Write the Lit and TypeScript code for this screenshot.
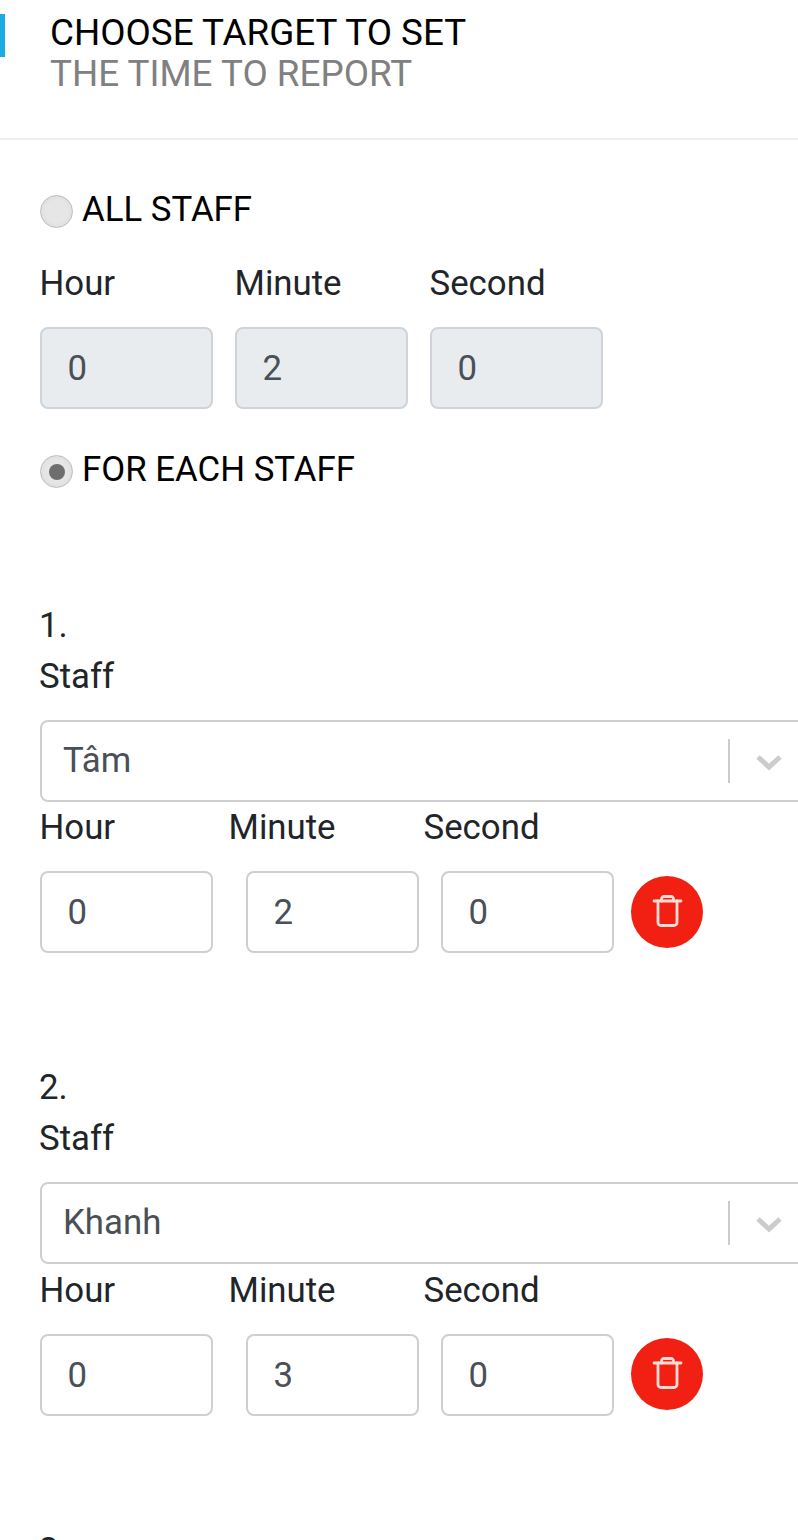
import { LitElement, html, css, svg } from "lit";
import { customElement } from "lit/decorators.js";

const trash = svg`<svg class="trash" viewBox="0 0 31 34" width="31" height="34" fill="none" stroke="#f9dcd7" stroke-width="2.800" stroke-linecap="round" stroke-linejoin="round"><path d="M2 6h27"/><path d="M9.500 6V4a2.500 2.500 0 0 1 2.500-2.500h7a2.500 2.500 0 0 1 2.500 2.500v2"/><path d="M6 6v21.500a3 3 0 0 0 3 3h13a3 3 0 0 0 3-3V6"/></svg>`;

const chevron = svg`<svg viewBox="0 0 26 18" width="26" height="18" fill="none" stroke="#cccccc" stroke-width="5" stroke-linejoin="miter"><path d="M2 4l11 10L24 4"/></svg>`;

@customElement("app-root")
export class AppRoot extends LitElement {
  static styles = css`
    :host {
      display: block;
      width: 798px;
      height: 1540px;
      overflow: hidden;
      background: #fff;
      font-family: Roboto, "Noto Sans", sans-serif;
      color: #212529;
    }
    .header {
      height: 138px;
      border-bottom: 2px solid #eeeeee;
      display: flex;
      align-items: flex-start;
    }
    .accent {
      width: 5px;
      height: 43px;
      margin-top: 14px;
      background: #1cabe2;
    }
    .titles {
      margin-left: 45px;
      padding-top: 13px;
      font-size: 36.800px;
      line-height: 40.500px;
      color: #000;
    }
    .titles .sub { color: #808080; }
    .body { padding: 0 0 0 40px; }
    .radio-row {
      display: flex;
      align-items: center;
      gap: 10px;
      height: 40px;
      font-size: 34.800px;
      color: #000;
    }
    .radio-text { padding-bottom: 2px; margin-left: -1px; }
    .radio {
      width: 33px;
      height: 33px;
      border-radius: 50%;
      box-sizing: border-box;
      border: 1px solid #bdbdbd;
      background: radial-gradient(circle, #e6e6e6 50%, #dcdcdc 85%, #eeeeee 100%);
      display: flex;
      align-items: center;
      justify-content: center;
      margin-top: 3px;
    }
    .radio.on::after {
      content: "";
      width: 16px;
      height: 16px;
      border-radius: 50%;
      background: #6e6e6e;
    }
    .first { margin-top: 50px; }
    .labels {
      display: flex;
      font-size: 34.800px;
      line-height: 40px;
      margin-left: -0.500px;
    }
    .inputs { display: flex; align-items: center; }
    .field {
      box-sizing: border-box;
      width: 173px;
      height: 82px;
      border: 2px solid #cfcfcf;
      border-radius: 8px;
      padding: 0 0 0 25.500px;
      display: flex;
      align-items: center;
      font-size: 34.800px;
      color: #495057;
      background: #fff;
    }
    .field.off { background: #e9ecef; border-color: #ced4da; }
    .field.gap-a { margin-left: 33px; }
    .field.gap-b { margin-left: 22px; }
    .w-row { width: 189px; }
    .w-195 { width: 195px; }
    .all-labels { margin-top: 33px; }
    .all-inputs { margin-top: 24px; gap: 22px; }
    .second { margin-top: 41px; }
    .entry { height: 462.400px; }
    .entries { margin-top: 115px; }
    .num { font-size: 34.800px; line-height: 40px; margin-left: -1px; }
    .staff { font-size: 34.800px; line-height: 40px; margin: 11px 0 0 -1px; }
    .select {
      box-sizing: border-box;
      width: 790px;
      height: 82px;
      margin-top: 24px;
      border: 2px solid #cfcfcf;
      border-radius: 8px;
      display: flex;
      align-items: center;
      padding-left: 21px;
      font-size: 34.800px;
      color: #495057;
    }
    .select .value { width: 665px; padding-bottom: 2px; }
    .sep { width: 2px; height: 44px; background: #cccccc; }
    .chev { margin-left: 26px; display: flex; margin-top: 2px; }
    .row-labels { margin-top: 5.200px; }
    .row-inputs { margin-top: 24px; }
    .del {
      width: 72px;
      height: 72px;
      border-radius: 50%;
      background: #f12012;
      display: flex;
      align-items: center;
      justify-content: center;
      margin: -1px 0 0 17px;
    }
  `;

  private entries = [
    { staff: "Tâm", minute: "2" },
    { staff: "Khanh", minute: "3" },
    { staff: "", minute: "" },
  ];

  render() {
    return html`
      <div class="header">
        <div class="accent"></div>
        <div class="titles">
          <div>CHOOSE TARGET TO SET</div>
          <div class="sub">THE TIME TO REPORT</div>
        </div>
      </div>
      <div class="body">
        <div class="radio-row first"><span class="radio"></span><span class="radio-text">ALL STAFF</span></div>
        <div class="labels all-labels">
          <span class="w-195">Hour</span>
          <span class="w-195">Minute</span>
          <span>Second</span>
        </div>
        <div class="inputs all-inputs">
          <div class="field off">0</div>
          <div class="field off">2</div>
          <div class="field off">0</div>
        </div>
        <div class="radio-row second"><span class="radio on"></span><span class="radio-text">FOR EACH STAFF</span></div>
        <div class="entries">
          ${this.entries.map((e, i) => html`
            <div class="entry">
              <div class="num">${i + 1}.</div>
              ${e.staff ? html`
                <div class="staff">Staff</div>
                <div class="select">
                  <span class="value">${e.staff}</span>
                  <span class="sep"></span>
                  <span class="chev">${chevron}</span>
                </div>
                <div class="labels row-labels">
                  <span class="w-row">Hour</span>
                  <span class="w-195">Minute</span>
                  <span>Second</span>
                </div>
                <div class="inputs row-inputs">
                  <div class="field">0</div>
                  <div class="field gap-a">${e.minute}</div>
                  <div class="field gap-b">0</div>
                  <div class="del">${trash}</div>
                </div>
              ` : ""}
            </div>
          `)}
        </div>
      </div>
    `;
  }
}
